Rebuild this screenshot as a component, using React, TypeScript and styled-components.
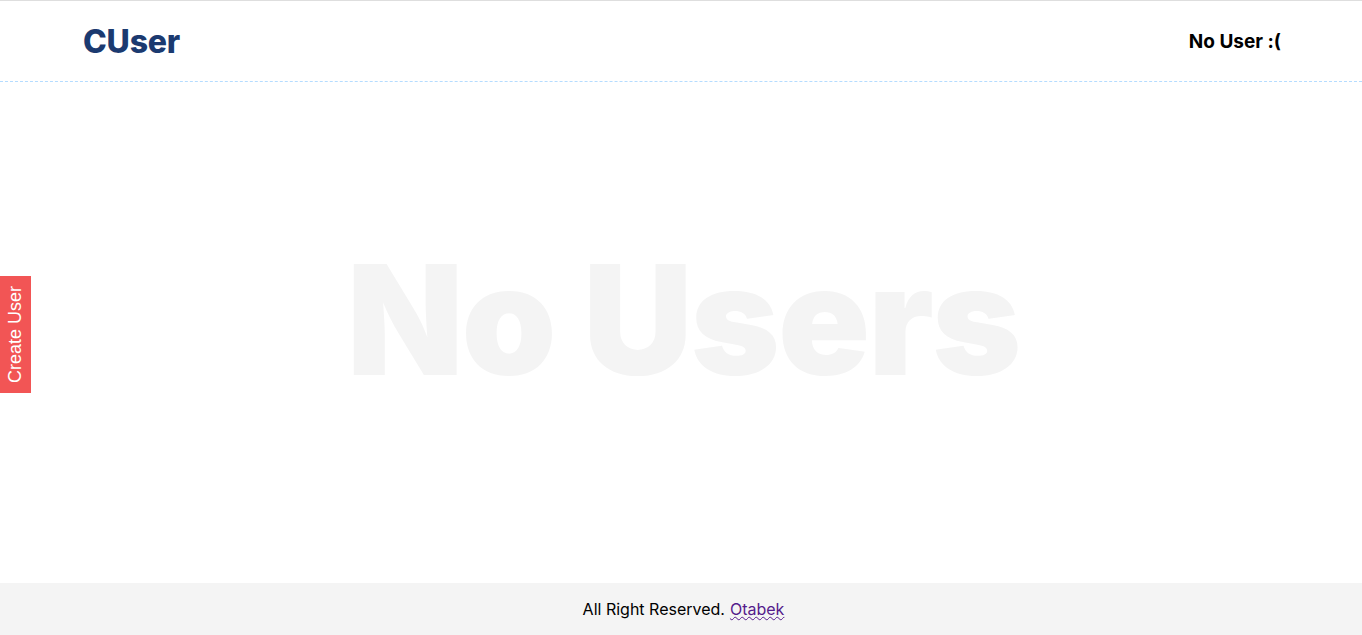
import React from "react";
import styled, { createGlobalStyle } from "styled-components";

const Global = createGlobalStyle`
  html, body { margin: 0; padding: 0; }
  body { font-family: Inter, "Noto Sans", sans-serif; background: #fff; color: #000; }
  * { box-sizing: border-box; }
`;

const Page = styled.div`
  min-height: 100vh;
  display: flex;
  flex-direction: column;
  position: relative;
`;

const Header = styled.header`
  border-top: 1px solid #dedede;
  border-bottom: 1px dashed #b5dcff;
  height: 82px;
  display: flex;
  align-items: center;
`;

const Container = styled.div`
  width: 1200px;
  margin: 0 auto;
  padding-left: 2px;
  display: flex;
  align-items: center;
  justify-content: space-between;
`;

const Logo = styled.h1`
  margin: 0;
  font-size: 32px;
  font-weight: 800;
  color: #1b3a70;
  letter-spacing: -0.2px;
`;

const UserLabel = styled.h3`
  margin: 0;
  font-size: 19px;
  font-weight: 700;
  color: #000;
`;

const Main = styled.main`
  flex: 1;
  display: flex;
  align-items: center;
  justify-content: center;
  padding-bottom: 26px;
`;

const Empty = styled.h2`
  margin: 0;
  font-size: 152px;
  font-weight: 900;
  color: #f4f4f4;
  letter-spacing: -2px;
  user-select: none;
  padding-left: 4px;
`;

const CreateButton = styled.button`
  position: absolute;
  left: 0;
  top: 276px;
  width: 31px;
  height: 117px;
  border: none;
  padding: 0;
  background: #f25555;
  color: #fff;
  font-family: "Liberation Sans", Arial, sans-serif;
  font-size: 18px;
  cursor: pointer;
  display: flex;
  align-items: center;
  justify-content: center;
`;

const Rotated = styled.span`
  display: block;
  white-space: nowrap;
  transform: rotate(-90deg);
`;

const Footer = styled.footer`
  height: 52px;
  background: #f4f4f4;
  display: flex;
  align-items: center;
  justify-content: center;
  font-size: 16px;
  padding-left: 5px;
`;

const Link = styled.a`
  color: #551a8b;
  text-decoration: underline wavy;
  text-decoration-thickness: 1px;
  margin-left: 5px;
`;

export default function App() {
  return (
    <Page>
      <Global />
      <Header>
        <Container>
          <Logo>CUser</Logo>
          <UserLabel>No User :(</UserLabel>
        </Container>
      </Header>
      <Main>
        <Empty>No Users</Empty>
      </Main>
      <CreateButton>
        <Rotated>Create User</Rotated>
      </CreateButton>
      <Footer>
        All Right Reserved.<Link href="#">Otabek</Link>
      </Footer>
    </Page>
  );
}
